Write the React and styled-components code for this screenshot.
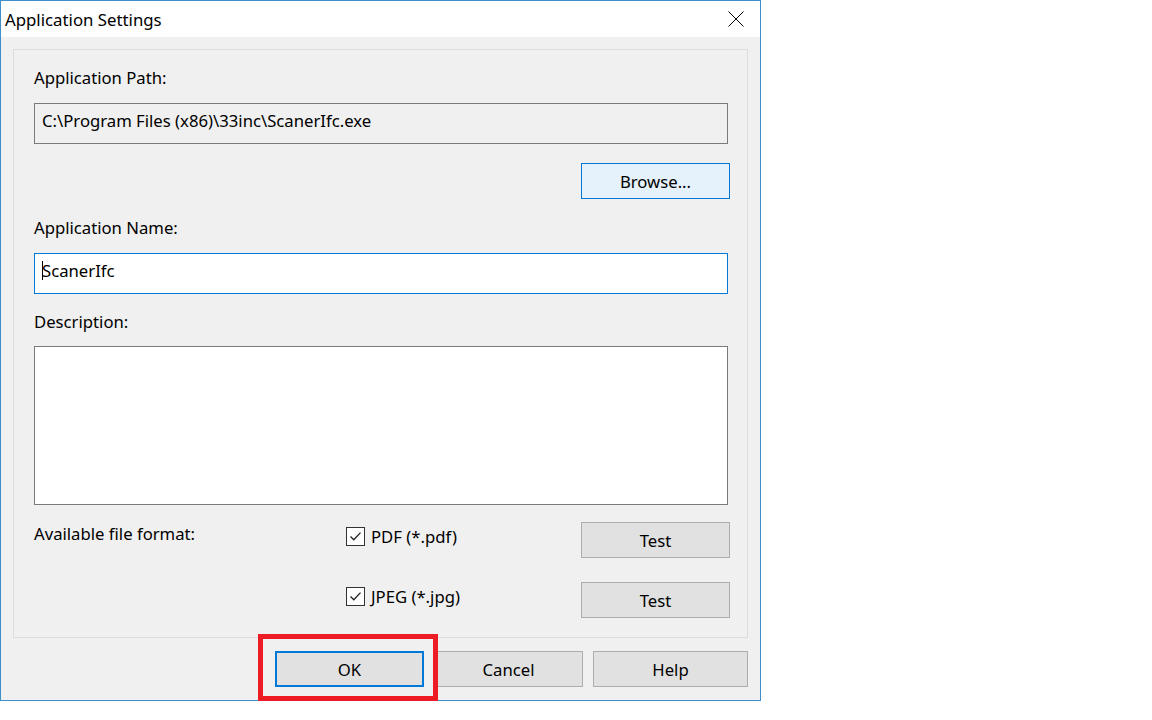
import React from "react";
import styled, { createGlobalStyle } from "styled-components";

const GlobalStyle = createGlobalStyle`
  html, body {
    margin: 0;
    padding: 0;
    background: #ffffff;
  }
  body {
    font-family: "Noto Sans", "Open Sans", sans-serif;
    font-size: 16.7px;
    color: #000000;
  }
`;

const FONT = `"Noto Sans", "Open Sans", sans-serif`;

const Page = styled.div`
  position: relative;
  width: 1152px;
  height: 720px;
  display: flex;
`;

const Window = styled.div`
  box-sizing: border-box;
  width: 761px;
  height: 701px;
  border: 1px solid #3d8fca;
  display: flex;
  flex-direction: column;
  background: #f0f0f0;
  font-family: ${FONT};
`;

const TitleBar = styled.div`
  height: 36px;
  background: #ffffff;
  display: flex;
  align-items: center;
  justify-content: space-between;
  padding: 0 16px 0 4px;
`;

const Title = styled.div`
  font-size: 16.8px;
  padding-top: 1px;
`;

const CloseIcon = styled.svg`
  width: 16px;
  height: 16px;
  display: block;
  margin-bottom: 1px;
`;

const Body = styled.div`
  flex: 1;
  padding: 12px 12px 0 12px;
  display: flex;
  flex-direction: column;
`;

const GroupBox = styled.div`
  box-sizing: border-box;
  height: 589px;
  border: 1px solid #dcdcdc;
  padding: 18px 17px 0 20px;
  display: flex;
  flex-direction: column;
`;

const Label = styled.div`
  font-size: 16.7px;
  line-height: 20px;
  height: 20px;
  margin-top: ${(p) => p.$top || 0}px;
`;

const Field = styled.div`
  box-sizing: border-box;
  height: ${(p) => p.$height || 41}px;
  margin-top: ${(p) => p.$top || 0}px;
  margin-right: 2px;
  border: 1px solid ${(p) => (p.$focused ? "#0078d7" : "#7a7a7a")};
  background: ${(p) => (p.$readOnly ? "#f0f0f0" : "#ffffff")};
  padding: 0 7px 7px 7px;
  display: flex;
  align-items: ${(p) => (p.$multi ? "flex-start" : "center")};
  font-size: 16.7px;
  white-space: nowrap;
`;

const Caret = styled.span`
  display: inline-block;
  width: 1px;
  height: 19px;
  background: #000;
  margin-right: -1px;
`;

const RightRow = styled.div`
  display: flex;
  justify-content: flex-end;
  margin-top: ${(p) => p.$top || 0}px;
`;

const Button = styled.button`
  box-sizing: border-box;
  width: ${(p) => p.$width || 149}px;
  height: 36px;
  padding: 0;
  font-family: ${FONT};
  font-size: 16.7px;
  color: #000;
  background: ${(p) => (p.$hover ? "#e5f1fb" : "#e1e1e1")};
  border: ${(p) =>
    p.$default
      ? "2px solid #0078d7"
      : p.$hover
      ? "1px solid #0078d7"
      : "1px solid #adadad"};
  border-radius: 0;
  outline: none;
`;

const FormatGrid = styled.div`
  display: grid;
  grid-template-columns: 312px 235px 149px;
  grid-auto-rows: 36px;
  row-gap: 24px;
  margin-top: 17px;
`;

const FormatLabel = styled.div`
  font-size: 16.7px;
  line-height: 20px;
  padding-top: 2px;
`;

const CheckItem = styled.label`
  display: flex;
  align-items: flex-start;
  gap: 6px;
  padding-top: 5px;
  font-size: 16.7px;
  line-height: 20px;
  grid-column: 2;
`;

const Box = styled.span`
  box-sizing: border-box;
  width: 19px;
  height: 19px;
  border: 1px solid #333333;
  background: #ffffff;
  display: flex;
  align-items: center;
  justify-content: center;
  flex: none;
`;

const CheckText = styled.span`
  margin-top: 0;
`;

const ButtonBar = styled.div`
  display: flex;
  justify-content: flex-end;
  gap: 10px;
  margin-top: 13px;
`;

const Highlight = styled.div`
  position: absolute;
  left: 258px;
  top: 634px;
  width: 180px;
  height: 67px;
  box-sizing: border-box;
  border: 5px solid #ed1c24;
  pointer-events: none;
`;

const Check = () => (
  <Box>
    <svg width="15" height="15" viewBox="0 0 15 15">
      <path d="M2.5 7.5 L5.8 10.8 L12.5 3.6" fill="none" stroke="#222" strokeWidth="1.3" />
    </svg>
  </Box>
);

export default function App() {
  return (
    <>
      <GlobalStyle />
      <Page>
        <Window>
          <TitleBar>
            <Title>Application Settings</Title>
            <CloseIcon viewBox="0 0 16 16">
              <path d="M0.5 0.5 L15.5 15.5 M15.5 0.5 L0.5 15.5" stroke="#000" strokeWidth="1" />
            </CloseIcon>
          </TitleBar>
          <Body>
            <GroupBox>
              <Label>Application Path:</Label>
              <Field $readOnly $top={15} $height={41}>
                C:\Program Files (x86)\33inc\ScanerIfc.exe
              </Field>
              <RightRow $top={19}>
                <Button $hover>Browse...</Button>
              </RightRow>
              <Label $top={19}>Application Name:</Label>
              <Field $focused $top={15} $height={41}>
                <Caret />
                ScanerIfc
              </Field>
              <Label $top={18}>Description:</Label>
              <Field $multi $top={14} $height={159} />
              <FormatGrid>
                <FormatLabel>Available file format:</FormatLabel>
                <CheckItem>
                  <Check />
                  <CheckText>PDF (*.pdf)</CheckText>
                </CheckItem>
                <Button>Test</Button>
                <CheckItem>
                  <Check />
                  <CheckText>JPEG (*.jpg)</CheckText>
                </CheckItem>
                <Button>Test</Button>
              </FormatGrid>
            </GroupBox>
            <ButtonBar>
              <Button $default>OK</Button>
              <Button>Cancel</Button>
              <Button $width={155}>Help</Button>
            </ButtonBar>
          </Body>
        </Window>
        <Highlight />
      </Page>
    </>
  );
}
